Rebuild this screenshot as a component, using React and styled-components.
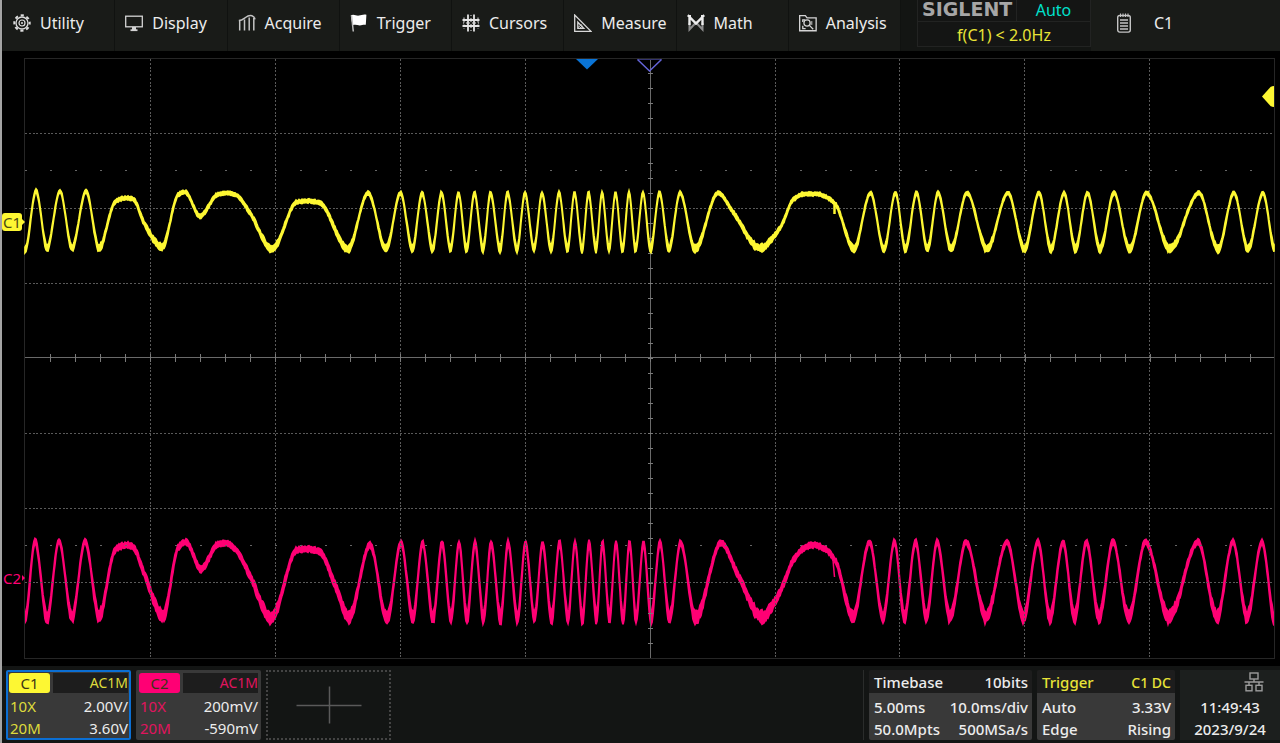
import React from 'react';
import styled, { createGlobalStyle, css } from 'styled-components';

const YELLOW = '#fdf733';
const PINK = '#ff0074';

/* ---------- icons ---------- */

const GearIcon = () => (
  <svg width='18' height='18' viewBox='0 0 18 18' fill='none' stroke='#dcdcdc'>
    <circle cx='9' cy='9' r='6' strokeWidth='1.3' />
    <circle cx='9' cy='9' r='7.7' strokeWidth='2' strokeDasharray='3.2 2.85' strokeDashoffset='1.6' />
    <circle cx='9' cy='9' r='3' strokeWidth='1.2' />
    <circle cx='9' cy='9' r='1' fill='#dcdcdc' stroke='none' />
  </svg>
);

const DisplayIcon = () => (
  <svg width='18' height='18' viewBox='0 0 18 18' fill='none' stroke='#d4d4d4' strokeWidth='1.3'>
    <rect x='0.7' y='2.2' width='16.6' height='10.6' />
    <path d='M5.5 16.2h7' strokeWidth='1.8' />
    <path d='M9 13v3' strokeWidth='4' />
  </svg>
);

const AcquireIcon = () => (
  <svg width='18' height='18' viewBox='0 0 18 18' fill='none' stroke='#c4c4c4' strokeWidth='1.5'>
    <path d='M0.8 6.6C4 6.6 5.5 5 7.5 3.500S12 1.200 14 1.800s2.6 2 3 3.6' />
    <path d='M1.700 7v9.500M6.500 5.500v11M11.200 3.500v13M15.800 4v12.500' />
  </svg>
);

const FlagIcon = () => (
  <svg width='18' height='18' viewBox='0 0 18 18'>
    <path d='M0.8 1.4c3-1.6 5.2.6 8.200.2 2.300-.3 4.500-1.600 7.400-.8l-.6 10c-2.500-.5-3.800.6-6 .6-2.500 0-4.500-1.200-7.300 0z' fill='#fff' />
    <path d='M1.500 1.500l1.800 16' stroke='#bdbdbd' strokeWidth='1.500' fill='none' />
  </svg>
);

const CursorsIcon = () => (
  <svg width='18' height='18' viewBox='0 0 18 18' fill='none' stroke='#e4e4e4'>
    <path d='M6 0.500v17M12 0.500v17M0.500 6h17M0.500 12h17' strokeWidth='1.800' />
    <path d='M9 1v16M1 9h16' strokeWidth='1' strokeDasharray='1 2' />
    <path d='M2 3.500v11M16 3.500v11' strokeWidth='1' strokeDasharray='1.500 2' />
  </svg>
);

const MeasureIcon = () => (
  <svg width='18' height='18' viewBox='0 0 18 18' fill='none' stroke='#d8d8d8' strokeWidth='1.300'>
    <path d='M0.700 1v16.300H17z' />
    <path d='M3.800 8.200v6.100h6z' />
    <path d='M4 13.500l3.500-3M6 14l2.500-2' strokeWidth='1' />
  </svg>
);

const MathIcon = () => (
  <svg width='18' height='18' viewBox='0 0 18 18' fill='none'>
    <path d='M2.500 9v6.500L9 8.500l6.500 7V9' stroke='#8d8d8d' strokeWidth='2' />
    <path d='M2.500 11V3L9 9.500 15.500 3v8' stroke='#ededed' strokeWidth='2.400' />
    <path d='M0.500 2h3.500M14 2h3.500' stroke='#ededed' strokeWidth='2' />
  </svg>
);

const AnalysisIcon = () => (
  <svg width='18' height='18' viewBox='0 0 19 18' fill='none' stroke='#d4d4d4' strokeWidth='1.400'>
    <path d='M0.700 17.200V1.200h6l1.800 2.300h9.600v13.700z' />
    <circle cx='8.500' cy='9' r='3.300' />
    <path d='M11 11.500l4 4M4 8V5.700h2.500M4 12v3h3' />
    <path d='M13.500 7v4' strokeWidth='1' />
  </svg>
);

const NoteIcon = () => (
  <svg width='14' height='20' viewBox='0 0 14 20' fill='none' stroke='#c4c4c4' strokeWidth='1.400'>
    <rect x='0.700' y='2.500' width='12.600' height='16.600' rx='2' />
    <path d='M3.500 0.500v3.500M6 0.500v3.500M8.500 0.500v3.500M11 0.500v3.500' strokeWidth='1.100' />
    <path d='M3 7h8M3 10h8M3 13h8M3 16h8' strokeWidth='1.300' />
  </svg>
);

const NetworkIcon = () => (
  <svg width='20' height='20' viewBox='0 0 20 20' fill='none' stroke='#9c9c9c' strokeWidth='1.400'>
    <rect x='6' y='1' width='8' height='6' />
    <path d='M0.500 10h19M10 7v3M5 10v3M15 10v3' />
    <rect x='2' y='13.300' width='6' height='5.500' />
    <rect x='12' y='13.300' width='6' height='5.500' />
  </svg>
);

const PlusIcon = () => (
  <svg width='66' height='38' viewBox='0 0 66 38' stroke='#5a5a5a'>
    <path d='M0.500 19.500h65M33.500 0.500v37' strokeWidth='1.500' />
  </svg>
);

/* ---------- waveforms ---------- */

// [x, y] turning points; the dense part of the chirp alternates between two levels
const MIDDLE = [
  400.5, 412.5, 422, 432.5, 441.5, 450.5, 458.5, 466.5, 474.5, 483, 490.5, 500, 507.5, 517, 525, 534, 542, 551, 559,
  567.5, 574.5, 582, 588.5, 596, 602, 609, 615.5, 622.5, 629, 635.5, 643, 650.5, 659.5, 669, 680, 695,
];
const TAIL = [
  854, 870.5, 884, 895.5, 905.5, 916.5, 927.5, 938, 951, 967, 987, 1008, 1024.5, 1039, 1051, 1064, 1075.5, 1087.5,
  1100, 1114, 1129.5, 1146.5, 1170, 1199, 1218, 1234, 1248, 1263,
];

const swing = (xs, first, second) => xs.map((x, i) => [x, i % 2 ? second : first]);

const C1_POINTS = [
  [25, 250], [36, 191], [47, 248], [60, 191], [72, 248], [86, 191], [99, 248], [115, 202], [126, 198], [133, 199],
  [145, 225], [162, 247], [178, 195], [185, 192], [200, 216], [217, 195], [226, 193], [236, 195], [250, 213],
  [272, 249], [297, 202], [308, 201], [320, 203], [348, 249], [368, 193], [386, 249],
  ...swing(MIDDLE, 193, 249),
  [718, 193], [733, 212], [760, 248], [780, 228], [793, 200], [804, 194], [817, 194], [828, 198], [836, 205],
  ...swing(TAIL, 249, 193),
  [1275, 250],
];

const C2_POINTS = [
  [25, 618], [35, 541], [47, 618], [59, 541], [72, 617], [85, 541], [99, 616], [115, 550], [127, 545], [133, 547],
  [145, 576], [163, 616], [178, 548], [186, 542], [201, 569], [217, 545], [225, 543], [236, 550], [250, 576],
  [271, 618], [297, 550], [308, 549], [320, 552], [335, 585], [349, 617], [370, 545], [387, 619],
  ...swing(MIDDLE.map((x) => x + 0.5), 543, 618),
  [721, 543], [738, 575], [762, 617], [778, 596], [793, 561], [804, 548], [813, 545], [825, 549], [836, 562],
  ...swing(TAIL.map((x) => x - 1), 617, 542),
  [1275, 622],
];

// smooth monotone curve through the points
const tangents = (pts) =>
  pts.map((p, i) => {
    if (i === 0 || i === pts.length - 1) return 0;
    const a = (p[1] - pts[i - 1][1]) / (p[0] - pts[i - 1][0]);
    const b = (pts[i + 1][1] - p[1]) / (pts[i + 1][0] - p[0]);
    return a * b <= 0 ? 0 : (2 * a * b) / (a + b);
  });

const noise = (n) => {
  const v = Math.sin(n * 12.9898) * 43758.5453;
  return v - Math.floor(v);
};

// closed band around the curve, wider near the bottom of the swing
const buildTrace = (pts, topNoise, bottomNoise, low, high) => {
  const m = tangents(pts);
  const upper = [];
  const lower = [];
  let k = 0;
  for (let x = 25; x <= 1274; x += 1) {
    while (k < pts.length - 2 && x > pts[k + 1][0]) k += 1;
    const [x0, y0] = pts[k];
    const [x1, y1] = pts[k + 1];
    const h = x1 - x0;
    const t = (x - x0) / h;
    const t2 = t * t;
    const t3 = t2 * t;
    const y =
      (2 * t3 - 3 * t2 + 1) * y0 + (t3 - 2 * t2 + t) * h * m[k] + (3 * t2 - 2 * t3) * y1 + (t3 - t2) * h * m[k + 1];
    const depth = Math.max(0, (y - high) / (low - high));
    const half = topNoise + (bottomNoise - topNoise) * depth * depth;
    upper.push(`${x} ${(y - half * (0.6 + noise(x) * 0.8)).toFixed(1)}`);
    lower.unshift(`${x} ${(y + half * (0.6 + noise(x + 7) * 0.8)).toFixed(1)}`);
  }
  return `M${upper.join('L')}L${lower.join('L')}Z`;
};

const C1_TRACE = buildTrace(C1_POINTS, 1.6, 3.2, 249, 192);
const C2_TRACE = buildTrace(C2_POINTS, 2.4, 5.4, 618, 542);

const range = (n) => Array.from({ length: n }, (_, i) => i);

const Graticule = () => (
  <g fill='none' stroke='#626262' shapeRendering='crispEdges'>
    <rect x='24.5' y='58.5' width='1250' height='600' stroke='#262626' />
    {range(9).map((i) => (
      <path key={i} d={`M${150.5 + Math.round(i * 124.9)} 59v599`} strokeDasharray='2 1.75' stroke='#5a5a5a' />
    ))}
    {[133, 208, 283, 433, 508, 582].map((y) => (
      <path key={y} d={`M25 ${y}.5h1249`} strokeDasharray='2 1.75' stroke='#5a5a5a' />
    ))}
    {[170, 545].map((y) => (
      <path key={y} d={`M25 ${y}.5h1249`} strokeDasharray='2 23' stroke='#666' />
    ))}
    <path d='M25 357.500h1249M650.500 59v599' stroke='#6a6a6a' strokeWidth='1' />
    {range(49).map((i) => (
      <path key={i} d={`M${50.5 + i * 25} 354v8`} stroke='#7a7a7a' />
    ))}
    {range(39).map((i) => (
      <path key={i} d={`M648 ${73.5 + i * 15}h5`} stroke='#7a7a7a' />
    ))}
  </g>
);

const Waveforms = () => (
  <PlotSvg viewBox='24 58 1251 601' preserveAspectRatio='none' role='img' aria-label='Waveforms C1 and C2'>
    <path d={C2_TRACE} fill={PINK} stroke={PINK} strokeWidth='1.800' />
    <path d='M833 560l1.500 17' stroke={PINK} strokeWidth='1.500' />
    <Graticule />
    <path d={C1_TRACE} fill={YELLOW} stroke={YELLOW} strokeWidth='1.700' />
    <path d='M834.500 203v11' stroke={YELLOW} strokeWidth='2.500' />
    <path d='M576 59h22l-11 10.500z' fill='#0a74d6' />
    <path d='M637.500 59.500h24' stroke='#34346e' fill='none' />
    <path d='M637.500 59.500l12 11.500 12-11.500' stroke='#6464d8' strokeWidth='1.500' fill='none' />
    <path d='M1262 96.500l8.500-9.500q1.500-1 3.500-1v21q-2 0-3.500-1z' fill={YELLOW} />
  </PlotSvg>
);

/* ---------- page ---------- */

const MENU = [
  { label: 'Utility', Icon: GearIcon },
  { label: 'Display', Icon: DisplayIcon },
  { label: 'Acquire', Icon: AcquireIcon },
  { label: 'Trigger', Icon: FlagIcon },
  { label: 'Cursors', Icon: CursorsIcon },
  { label: 'Measure', Icon: MeasureIcon },
  { label: 'Math', Icon: MathIcon },
  { label: 'Analysis', Icon: AnalysisIcon },
];

const CHANNELS = [
  { name: 'C1', color: YELLOW, text: '#dedb3c', coupling: 'AC1M', probe: '10X', scale: '2.00V/', limit: '20M', offset: '3.60V', active: true },
  { name: 'C2', color: PINK, text: '#e0145f', coupling: 'AC1M', probe: '10X', scale: '200mV/', limit: '20M', offset: '-590mV' },
];

const App = () => {
  return (
    <>
      <GlobalStyle />
      <Scope>
        <Toolbar>
          <Menu>
            {MENU.map(({ label, Icon }) => (
              <MenuButton key={label} type='button'>
                <Icon />
                {label}
              </MenuButton>
            ))}
          </Menu>
          <Status>
            <StatusRow $top>
              <Brand>SIGLENT</Brand>
              <Mode>Auto</Mode>
            </StatusRow>
            <StatusRow>
              <Frequency>f(C1) &lt; 2.0Hz</Frequency>
            </StatusRow>
          </Status>
          <Selected>
            <NoteIcon />
            C1
          </Selected>
        </Toolbar>

        <Screen>
          <Gutter>
            <Marker $top='27.300%' $color='#4a4a10' $bg={YELLOW}>
              C1
              <MarkerTip width='4' height='6'><path d='M0 0l3 3-3 3z' fill={YELLOW} /></MarkerTip>
            </Marker>
            <Marker $top='86.600%' $color={PINK}>
              C2
              <MarkerTip width='4' height='6'><path d='M0 0l3 3-3 3z' fill={PINK} /></MarkerTip>
            </Marker>
          </Gutter>
          <Waveforms />
        </Screen>

        <BottomBar>
          {CHANNELS.map((ch) => (
            <ChannelCard key={ch.name} type='button' $active={ch.active}>
              <CardHead>
                <Tag $color={ch.color}>{ch.name}</Tag>
                <Coupling $color={ch.text}>{ch.coupling}</Coupling>
              </CardHead>
              <CardRow $color={ch.text} $first>
                <span>{ch.probe}</span>
                <Value>{ch.scale}</Value>
              </CardRow>
              <CardRow $color={ch.text}>
                <span>{ch.limit}</span>
                <Value>{ch.offset}</Value>
              </CardRow>
            </ChannelCard>
          ))}
          <AddButton type='button' aria-label='Add channel'>
            <PlusIcon />
          </AddButton>
          <Spacer />
          <InfoCard type='button' $width={163}>
            <InfoHead>
              <span>Timebase</span>
              <span>10bits</span>
            </InfoHead>
            <CardRow $first>
              <span>5.00ms</span>
              <span>10.0ms/div</span>
            </CardRow>
            <CardRow>
              <span>50.0Mpts</span>
              <span>500MSa/s</span>
            </CardRow>
          </InfoCard>
          <InfoCard type='button' $width={138}>
            <InfoHead $color='#e8e337'>
              <span>Trigger</span>
              <Small>C1 DC</Small>
            </InfoHead>
            <CardRow $first>
              <span>Auto</span>
              <span>3.33V</span>
            </CardRow>
            <CardRow>
              <span>Edge</span>
              <span>Rising</span>
            </CardRow>
          </InfoCard>
          <Clock>
            <ClockIcon>
              <NetworkIcon />
            </ClockIcon>
            <time>11:49:43</time>
            <time>2023/9/24</time>
          </Clock>
        </BottomBar>
      </Scope>
    </>
  );
};

const GlobalStyle = createGlobalStyle`
  * {
    box-sizing: border-box;
  }
  body {
    margin: 0;
    background: #000;
  }
  button {
    margin: 0;
    border: none;
    font: inherit;
    color: inherit;
    text-align: left;
    cursor: pointer;
  }
`;

const Scope = styled.div`
  display: flex;
  flex-direction: column;
  min-height: 100vh;
  border-left: 2px solid #a4a4a4;
  background: #000;
  color: #ececec;
  font-family: 'Noto Sans', 'Open Sans', sans-serif;
  font-size: 15px;
`;

const Toolbar = styled.header`
  display: flex;
  height: 51px;
  padding-left: 1px;
  background: #131513;
  font-size: 16px;
`;

const Menu = styled.nav`
  display: grid;
  flex: 0 1 898px;
  grid-template-columns: repeat(8, 1fr);
`;

const MenuButton = styled.button`
  display: flex;
  align-items: center;
  gap: 9px;
  padding: 0 0 6px 10px;
  border-right: 1px solid #101210;
  background: #191b18;
  white-space: nowrap;

  svg {
    flex: none;
  }
`;

const Status = styled.div`
  flex: 0 0 174px;
  margin: 0 0 4px 16px;
  border: 1px solid #222322;
  border-top: none;
  background: #141514;
`;

const StatusRow = styled.div`
  display: flex;
  align-items: center;
  justify-content: center;
  height: ${({ $top }) => ($top ? 22 : 25)}px;
  ${({ $top }) => $top && css`
    border-bottom: 1px solid #222322;
  `}
`;

const Brand = styled.span`
  flex: 0 0 99px;
  padding: 0 0 3px 4px;
  border-right: 1px solid #222322;
  color: #a6a6a6;
  font-family: 'DejaVu Sans', sans-serif;
  font-size: 19px;
  font-weight: bold;
  line-height: 18px;
`;

const Mode = styled.span`
  flex: 1;
  color: #00e0cc;
  line-height: 21px;
  text-align: center;
`;

const Frequency = styled.span`
  color: #e8e337;
`;

const Selected = styled.div`
  display: flex;
  flex: 1;
  align-items: center;
  gap: 23px;
  padding: 0 0 5px 26px;
  background: #191b18;
`;

const Screen = styled.main`
  display: flex;
  flex: 1;
  min-height: 0;
  padding: 7px 5px 7px 0;
`;

const Gutter = styled.div`
  position: relative;
  flex: 0 0 22px;
`;

const Marker = styled.div`
  position: absolute;
  left: 0;
  top: ${({ $top }) => $top};
  width: 20px;
  height: 18px;
  margin-top: -9px;
  border-radius: 3px;
  background: ${({ $bg }) => $bg || 'transparent'};
  color: ${({ $color }) => $color};
  font-size: 15px;
  line-height: 18px;
  text-align: center;
`;

const MarkerTip = styled.svg`
  position: absolute;
  left: 100%;
  top: 6px;
`;

const PlotSvg = styled.svg`
  display: block;
  flex: 1;
  min-width: 0;
  min-height: 0;
  overflow: visible;
`;

const BottomBar = styled.footer`
  display: flex;
  align-items: stretch;
  gap: 5px;
  height: 78px;
  padding: 4px 0 4px 4px;
  background: #131514;
`;

const ChannelCard = styled.button`
  display: flex;
  flex: 0 0 125px;
  flex-direction: column;
  padding: ${({ $active }) => ($active ? '1px 1px 0' : '3px 3px 2px')};
  border: ${({ $active }) => ($active ? '2px solid #0b6fd4' : 'none')};
  border-radius: 2px;
  background: #393939;
`;

const CardHead = styled.div`
  display: flex;
  align-self: stretch;
  gap: 3px;
  height: 20px;
`;

const Tag = styled.span`
  flex: 0 0 41px;
  border-radius: 3px;
  background: ${({ $color }) => $color};
  color: #3c3415;
  line-height: 21px;
  text-align: center;
`;

const Coupling = styled.span`
  flex: 1;
  background: #1d1d1d;
  color: ${({ $color }) => $color};
  font-size: 14px;
  line-height: 20px;
  text-align: right;
`;

const CardRow = styled.div`
  display: flex;
  align-self: stretch;
  justify-content: space-between;
  padding: ${({ $first }) => ($first ? 4 : 3)}px 0 0 1px;
  color: ${({ $color }) => $color || '#ececec'};
  line-height: 19px;
`;

const Value = styled.span`
  color: #ececec;
`;

const AddButton = styled.button`
  display: flex;
  flex: 0 0 125px;
  align-items: center;
  justify-content: center;
  border: 2px dotted #444;
  background: #131514;
`;

const Spacer = styled.div`
  flex: 1;
  border-right: 1px solid #2a2c2b;
`;

const InfoCard = styled.button`
  display: flex;
  flex: 0 0 ${({ $width }) => $width}px;
  flex-direction: column;
  padding: 0 4px;
  border-radius: 2px;
  background: linear-gradient(#1d1d1d 23px, #393939 23px);
  font-weight: 500;
`;

const InfoHead = styled.div`
  display: flex;
  align-items: center;
  align-self: stretch;
  justify-content: space-between;
  height: 24px;
  padding-left: 1px;
  color: ${({ $color }) => $color || '#ececec'};
`;

const Small = styled.span`
  font-size: 14px;
`;

const Clock = styled.div`
  display: flex;
  flex: 0 0 100px;
  flex-direction: column;
  align-items: center;
  background: #1c1f1e;
  font-weight: 500;
  line-height: 22px;
`;

const ClockIcon = styled.span`
  align-self: flex-end;
  height: 26px;
  padding: 2px 16px 0 0;
  line-height: 0;
`;

export default App;
